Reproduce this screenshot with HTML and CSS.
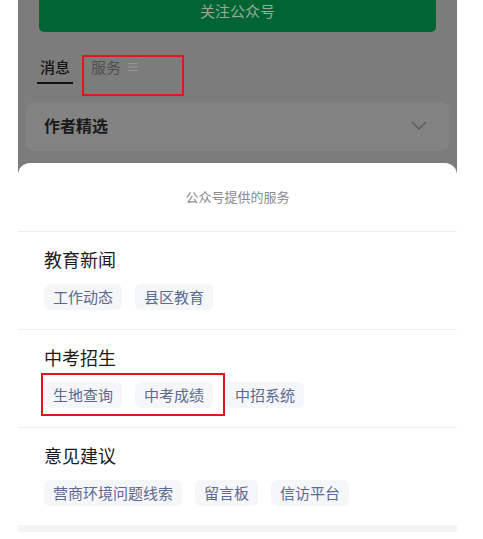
FILE: index.html
```html
<!DOCTYPE html>
<html lang="zh-CN">
<head>
<meta charset="utf-8">
<title>公众号服务</title>
<link rel="stylesheet" href="styles.css">
</head>
<body>
<div class="phone">
  <div class="backdrop">
    <div class="follow-wrap">
      <div class="follow-btn">关注公众号</div>
    </div>
    <div class="tabs">
      <div class="tab tab-active">消息</div>
      <div class="tab tab-muted">服务<svg class="menu-icon" viewBox="0 0 10 10" width="10" height="10"><path d="M0 1.5H10M0 5H10M0 8.5H10" stroke="#979797" stroke-width="1"/></svg></div>
      <div class="mark mark-tab"></div>
    </div>
    <div class="card">
      <span class="card-title">作者精选</span>
      <svg class="chev" viewBox="0 0 16 9" width="16" height="9"><path d="M1 1L8 8L15 1" fill="none" stroke="#585858" stroke-width="1.4"/></svg>
    </div>
  </div>
  <div class="sheet">
    <div class="sheet-head">公众号提供的服务</div>
    <div class="section">
      <div class="sec-title">教育新闻</div>
      <div class="tags">
        <span class="tag">工作动态</span>
        <span class="tag">县区教育</span>
      </div>
    </div>
    <div class="section">
      <div class="sec-title">中考招生</div>
      <div class="tags">
        <span class="tag">生地查询</span>
        <span class="tag">中考成绩</span>
        <span class="tag">中招系统</span>
        <div class="mark mark-tags"></div>
      </div>
    </div>
    <div class="section">
      <div class="sec-title">意见建议</div>
      <div class="tags">
        <span class="tag">营商环境问题线索</span>
        <span class="tag">留言板</span>
        <span class="tag">信访平台</span>
      </div>
    </div>
    <div class="foot-bar"></div>
  </div>
</div>
</body>
</html>
```

FILE: styles.css
```css
html, body {
  margin: 0;
  padding: 0;
  background: #ffffff;
}
body {
  font-family: "Noto Sans CJK SC", "Noto Sans", sans-serif;
  height: 539px;
  overflow: hidden;
}
.phone {
  margin-left: 18px;
  width: 439px;
  background: #7c7c7c;
  min-height: 539px;
}
.backdrop {
  padding-bottom: 12px;
}
.follow-wrap {
  padding: 0 21px;
  overflow: hidden;
  height: 33px;
}
.follow-btn {
  margin-top: -10px;
  height: 42px;
  border-radius: 5px;
  background: #006433;
  color: #93ab9c;
  font-size: 15px;
  line-height: 42px;
  text-align: center;
}
.tabs {
  position: relative;
  display: flex;
  gap: 15px;
  margin-top: 24px;
  padding-left: 19px;
}
.tab {
  padding: 0 3px 5px;
  font-size: 15px;
  line-height: 20px;
  display: flex;
  align-items: center;
}
.tab-active {
  color: #141414;
  font-weight: 500;
  border-bottom: 2px solid #111111;
}
.tab-muted {
  color: #4f4f4f;
  border-bottom: 2px solid transparent;
}
.menu-icon {
  margin-left: 7px;
}
.mark {
  position: absolute;
  box-sizing: border-box;
  border: 2px solid #e8141c;
}
.mark-tab {
  left: 64px;
  top: -2px;
  width: 102px;
  height: 41px;
}
.card {
  margin: 18px 8px 0;
  height: 49px;
  border-radius: 8px;
  background: #838383;
  display: flex;
  align-items: center;
  justify-content: space-between;
  padding: 0 22px 0 18px;
}
.card-title {
  font-size: 16px;
  line-height: 20px;
  margin-bottom: 3px;
  font-weight: 700;
  color: #1a1a1a;
}
.chev {
  margin-bottom: 2px;
}
.sheet {
  background: #ffffff;
  border-radius: 12px 12px 0 0;
  min-height: 376px;
}
.sheet-head {
  padding: 25px 0 25px;
  text-align: center;
  font-size: 13px;
  line-height: 18px;
  color: #8a8a8a;
}
.section {
  border-top: 1px solid #efefef;
  padding: 15px 26px 19px;
}
.sec-title {
  font-size: 18px;
  line-height: 24px;
  color: #1b1b1b;
}
.tags {
  position: relative;
  display: flex;
  gap: 13px;
  margin-top: 13px;
}
.tag {
  height: 26px;
  padding: 0 9px;
  border-radius: 6px;
  background: #f5f6f8;
  color: #5a6a92;
  font-size: 15px;
  line-height: 25px;
}
.mark-tags {
  left: -3px;
  top: -9px;
  width: 184px;
  height: 43px;
}
.foot-bar {
  height: 7px;
  background: #f5f5f5;
}
```
